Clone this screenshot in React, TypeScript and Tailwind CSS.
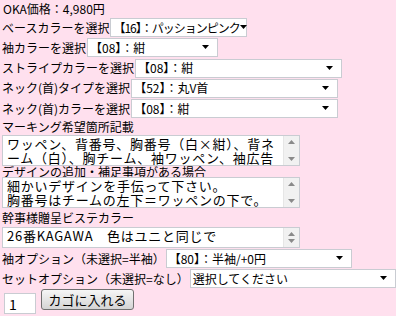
import React from "react";

const Arrow = () => (
  <svg width="8" height="5" viewBox="0 0 8 5" className="shrink-0">
    <path d="M0 0H7L3.5 4Z" fill="#000" />
  </svg>
);

const Select = ({ text, w, tight }: { text: string; w: string; tight?: boolean }) => (
  <div
    className={`${w} h-[19px] bg-white border border-[#c9ccd2] flex items-center justify-between pl-[2px] pr-[7px] text-[12px] leading-none text-black`}
  >
    <span className={tight ? "whitespace-nowrap tracking-[-1px]" : "whitespace-nowrap"}>{text}</span>
    <Arrow />
  </div>
);

const Scroll = () => (
  <div className="w-[16px] self-stretch bg-[#f1f1f1] border-l border-[#e6e6e6] flex flex-col justify-between items-center py-[4px]">
    <svg width="7" height="4" viewBox="0 0 7 4">
      <path d="M0 4H7L3.5 0Z" fill="#8a8a8a" />
    </svg>
    <svg width="7" height="4" viewBox="0 0 7 4">
      <path d="M0 0H7L3.5 4Z" fill="#8a8a8a" />
    </svg>
  </div>
);

const Area = ({ lines, h }: { lines: string[]; h: string }) => (
  <div className={`ml-[2px] w-[298px] ${h} shrink-0 bg-white border border-[#c9ccd2] flex overflow-hidden`}>
    <div className="flex-1 pl-[4px] pt-[1px] text-[13px] leading-[13.5px] tracking-[0.75px] overflow-hidden whitespace-nowrap">
      {lines.map((l, i) => (
        <div key={i}>{l}</div>
      ))}
    </div>
    <Scroll />
  </div>
);

const Row = ({ label, children }: { label: string; children: React.ReactNode }) => (
  <div className="flex items-center h-[19px] shrink-0">
    <span className="pl-[2px] pr-[1px] whitespace-nowrap">{label}</span>
    {children}
  </div>
);

const Label = ({ text, h }: { text: string; h: string }) => (
  <div className={`pl-[2px] ${h} shrink-0 flex items-center whitespace-nowrap`}>{text}</div>
);

export default function App() {
  return (
    <div
      className="w-[396px] h-[316px] bg-[#ffe0ee] text-black text-[12px] leading-none overflow-hidden flex flex-col"
      style={{ fontFamily: '"Noto Sans CJK JP", "Noto Sans", sans-serif' }}
    >
      <div className="h-[17px] shrink-0 pl-[3px] flex items-center">OKA価格：4,980円</div>
      <div className="flex flex-col gap-[1.25px] mt-[1px] shrink-0">
        <Row label="ベースカラーを選択">
          <Select text="【16】：パッションピンク" w="w-[137px]" tight />
        </Row>
        <Row label="袖カラーを選択">
          <Select text="【08】：紺" w="w-[131px]" />
        </Row>
        <Row label="ストライプカラーを選択">
          <Select text="【08】：紺" w="w-[207px]" />
        </Row>
        <Row label="ネック(首)タイプを選択">
          <Select text="【52】：丸V首" w="w-[207px]" />
        </Row>
        <Row label="ネック(首)カラーを選択">
          <Select text="【08】：紺" w="w-[207px]" />
        </Row>
      </div>
      <Label text="マーキング希望箇所記載" h="h-[17px]" />
      <Area
        h="h-[31px]"
        lines={["ワッペン、背番号、胸番号（白×紺）、背ネ", "ーム（白）、胸チーム、袖ワッペン、袖広告"]}
      />
      <Label text="デザインの追加・補足事項がある場合" h="h-[11px]" />
      <Area
        h="h-[31px]"
        lines={["細かいデザインを手伝って下さい。", "胸番号はチームの左下＝ワッペンの下で。"]}
      />
      <Label text="幹事様贈呈ビステカラー" h="h-[19px]" />
      <Area h="h-[21px]" lines={["26番KAGAWA　色はユニと同じで"]} />
      <div className="flex flex-col gap-[1px] mt-[1px] shrink-0">
        <Row label="袖オプション（未選択=半袖）">
          <Select text="【80】：半袖/+0円" w="w-[186px]" />
        </Row>
        <Row label="セットオプション（未選択=なし）">
          <Select text="選択してください" w="w-[231px]" />
        </Row>
      </div>
      <div className="flex items-start pl-[4px] mt-[1px] gap-[5px] shrink-0">
        <div className="w-[32px] h-[21px] mt-[4px] bg-white border border-[#c9ccd2] flex items-center pl-[4px] text-[14px]">
          1
        </div>
        <div className="w-[93px] h-[21px] rounded-[3px] border border-[#707070] bg-gradient-to-b from-[#f6f6f6] to-[#d4d4d4] flex items-center justify-center text-[13px]">
          カゴに入れる
        </div>
      </div>
    </div>
  );
}
